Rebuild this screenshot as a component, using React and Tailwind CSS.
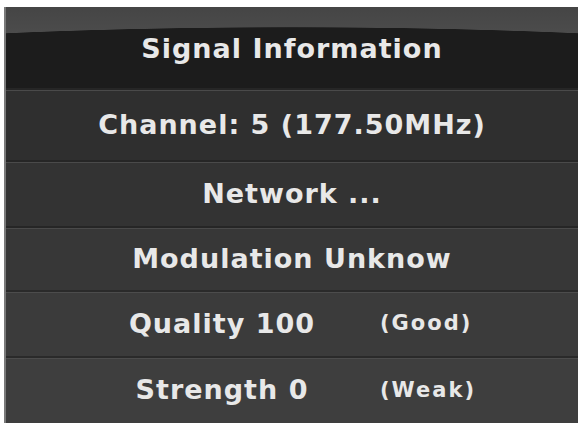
const rows = [
  { h: 'h-[72px]', bg: 'bg-[#2f2f2f]', text: 'Channel: 5 (177.50MHz)' },
  { h: 'h-[66px]', bg: 'bg-[#333333]', text: 'Network ...' },
  { h: 'h-[64px]', bg: 'bg-[#373737]', text: 'Modulation Unknow' },
]

const levels = [
  { h: 'h-[66px]', bg: 'bg-[#3b3b3b]', label: 'Quality 100', note: '(Good)' },
  { h: 'h-[67px]', bg: 'bg-[#3e3e3e]', label: 'Strength 0', note: '(Weak)' },
]

export default function App() {
  return (
    <div className="min-h-screen bg-white pt-[7px] pl-[4px]">
      <div
        className="flex w-[574px] h-[416px] flex-col overflow-hidden border-l-2 border-[#7a7a7a] text-[#e8e8e8] font-bold"
        style={{ fontFamily: '"DejaVu Sans", "Liberation Sans", sans-serif' }}
      >
        {/* glossy title bar */}
        <div className="flex h-[81px] items-center justify-center pt-[4px] bg-[radial-gradient(664px_61px_at_50%_100%,#1c1c1c_99%,transparent_100%),linear-gradient(#454545,#5a5a5a)]">
          <span className="text-[27px] tracking-[1px]">Signal Information</span>
        </div>

        {rows.map((r) => (
          <div
            key={r.text}
            className={`flex ${r.h} ${r.bg} items-center justify-center border-t-2 border-[#262626] shadow-[inset_0_1px_0_#4a4a4a]`}
          >
            <span className="text-[27px] tracking-[1px]">{r.text}</span>
          </div>
        ))}

        {levels.map((l) => (
          <div
            key={l.label}
            className={`flex ${l.h} ${l.bg} items-center border-t-2 border-[#2a2a2a] shadow-[inset_0_1px_0_#4c4c4c]`}
          >
            <span className="w-[432px] text-center text-[27px] tracking-[1px]">{l.label}</span>
            <span className="w-[0px] -ml-[58px] whitespace-nowrap text-[21px] tracking-[2px]">{l.note}</span>
          </div>
        ))}
      </div>
    </div>
  )
}
